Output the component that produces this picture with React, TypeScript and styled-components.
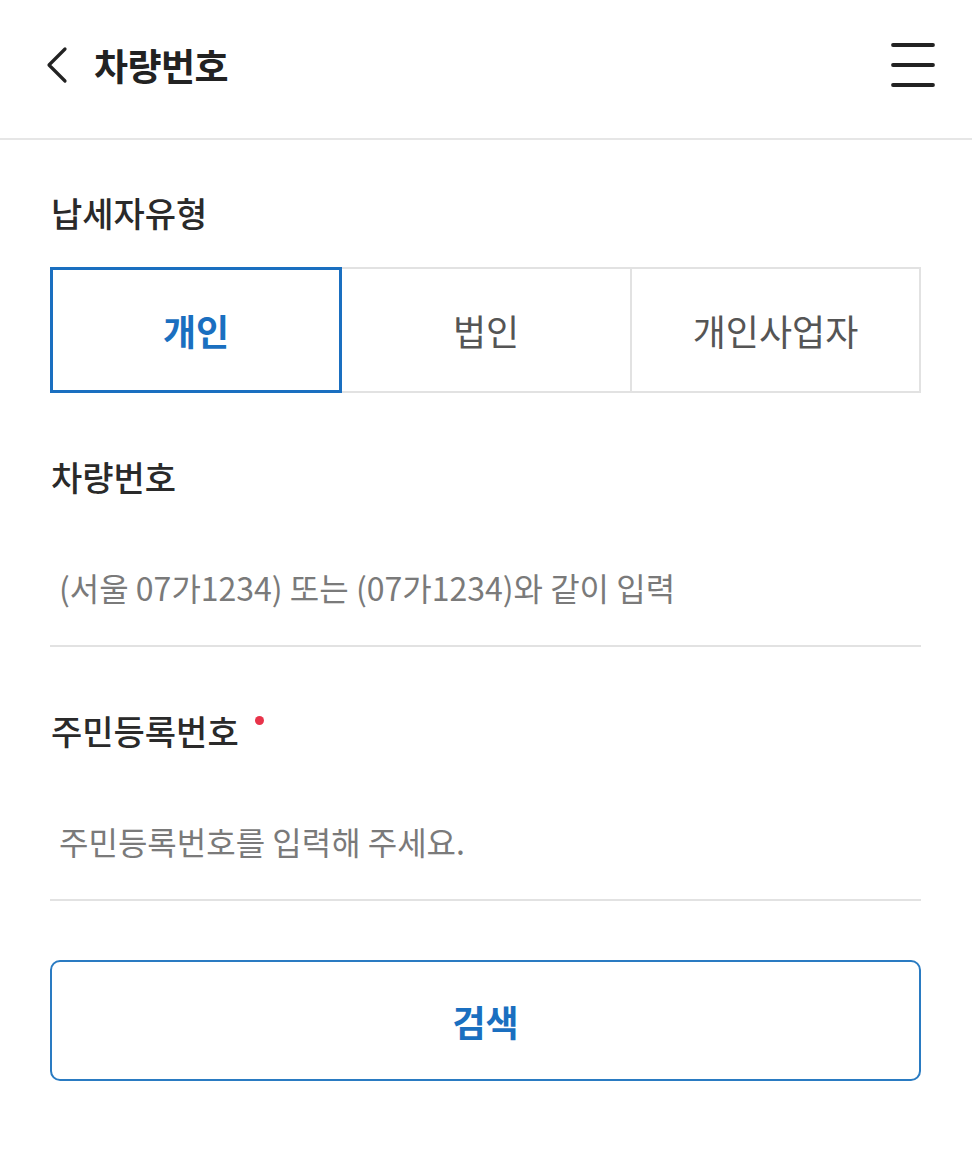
import React, { useState } from "react";
import styled, { createGlobalStyle } from "styled-components";

const Global = createGlobalStyle`
  html, body { margin: 0; padding: 0; background: #fff; }
  body { font-family: "Noto Sans CJK KR", "Noto Sans", sans-serif; color: #222; }
  * { box-sizing: border-box; }
`;

const Page = styled.div`
  width: 972px;
  min-height: 1167px;
  background: #fff;
`;

const Header = styled.header`
  height: 140px;
  display: flex;
  align-items: center;
  justify-content: space-between;
  padding: 0 35px 8px 40px;
  border-bottom: 2px solid #e6e6e6;
`;

const HeaderLeft = styled.div`
  display: flex;
  align-items: center;
  gap: 20px;
`;

const IconButton = styled.button`
  border: 0;
  background: none;
  padding: 0;
  display: flex;
  align-items: center;
  justify-content: center;
  cursor: pointer;
`;

const Title = styled.h1`
  margin: 0;
  font-size: 37px;
  line-height: 50px;
  font-weight: 700;
  color: #222;
  letter-spacing: -0.5px;
`;

const Main = styled.main`
  padding: 0 51px 0 50px;
  display: flex;
  flex-direction: column;
`;

const Label = styled.div<{ $first?: boolean }>`
  margin-top: ${(p) => (p.$first ? "50px" : "61px")};
  font-size: 34px;
  line-height: 45px;
  font-weight: 500;
  color: #2a2a2a;
  padding-left: 1px;
  display: flex;
  align-items: flex-start;
`;

const Required = styled.span`
  width: 9px;
  height: 9px;
  border-radius: 50%;
  background: #e8334a;
  margin-left: 16px;
  margin-top: 8px;
`;

const Segments = styled.div`
  margin-top: 32px;
  display: grid;
  grid-template-columns: 292px 290px 1fr;
  height: 126px;
`;

const Segment = styled.button<{ $active?: boolean }>`
  border: ${(p) => (p.$active ? "3px solid #1a6fc0" : "2px solid #e2e2e2")};
  margin-left: ${(p) => (p.$active ? "0" : "-2px")};
  background: #fff;
  font-family: inherit;
  font-size: 36px;
  font-weight: ${(p) => (p.$active ? 700 : 400)};
  color: ${(p) => (p.$active ? "#1a6fc0" : "#555")};
  display: flex;
  align-items: center;
  justify-content: center;
  padding: 0;
  position: relative;
  z-index: ${(p) => (p.$active ? 1 : 0)};
  &:first-child { margin-left: 0; }
`;

const InputRow = styled.div`
  margin-top: 30px;
  height: 118px;
  border-bottom: 2px solid #e2e2e2;
  display: flex;
  align-items: center;
`;

const Input = styled.input`
  width: 100%;
  border: 0;
  outline: none;
  background: transparent;
  font-family: inherit;
  font-size: 32px;
  color: #333;
  padding: 0 0 0 9px;
  margin-top: 0;
  &::placeholder { color: #7a7a7a; }
`;

const SearchButton = styled.button`
  margin-top: 59px;
  height: 121px;
  border: 2px solid #2a7bc2;
  border-radius: 10px;
  background: #fff;
  font-family: inherit;
  font-size: 36px;
  font-weight: 700;
  color: #1a6fc0;
  display: flex;
  align-items: center;
  justify-content: center;
`;

const types = ["개인", "법인", "개인사업자"];

export default function App() {
  const [sel, setSel] = useState(0);
  return (
    <Page>
      <Global />
      <Header>
        <HeaderLeft>
          <IconButton aria-label="뒤로">
            <svg width="34" height="40" viewBox="0 0 34 40">
              <path d="M25 4 L9 20 L25 36" fill="none" stroke="#222" strokeWidth="3.2" strokeLinecap="round" strokeLinejoin="round" />
            </svg>
          </IconButton>
          <Title>차량번호</Title>
        </HeaderLeft>
        <IconButton aria-label="메뉴">
          <svg width="48" height="46" viewBox="0 0 48 46">
            <g stroke="#222" strokeWidth="3.8" strokeLinecap="round">
              <line x1="4" y1="3" x2="44" y2="3" />
              <line x1="4" y1="23" x2="44" y2="23" />
              <line x1="4" y1="43" x2="44" y2="43" />
            </g>
          </svg>
        </IconButton>
      </Header>
      <Main>
        <Label $first>납세자유형</Label>
        <Segments>
          {types.map((t, i) => (
            <Segment key={t} $active={sel === i} onClick={() => setSel(i)}>
              {t}
            </Segment>
          ))}
        </Segments>
        <Label>차량번호</Label>
        <InputRow>
          <Input placeholder="(서울 07가1234) 또는 (07가1234)와 같이 입력" />
        </InputRow>
        <Label>
          주민등록번호
          <Required />
        </Label>
        <InputRow>
          <Input placeholder="주민등록번호를 입력해 주세요." />
        </InputRow>
        <SearchButton>검색</SearchButton>
      </Main>
    </Page>
  );
}
